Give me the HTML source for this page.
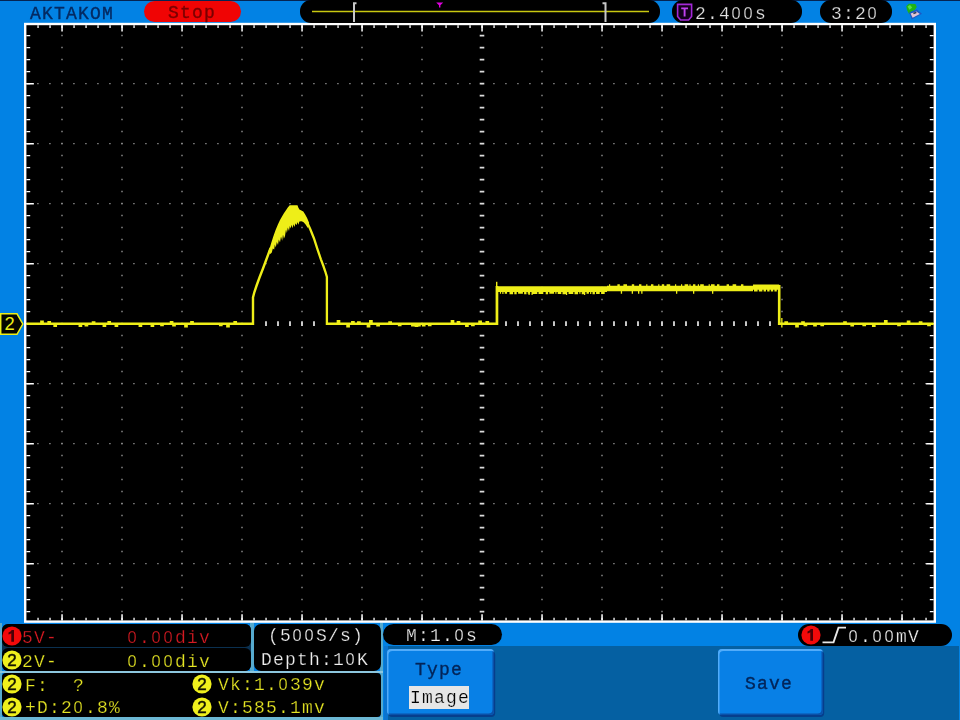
<!DOCTYPE html>
<html><head><meta charset="utf-8"><title>scope</title>
<style>
html,body{margin:0;padding:0;}
body{width:960px;height:720px;overflow:hidden;background:#0282e4;position:relative;font-family:"Liberation Mono",monospace;}
.abs{position:absolute;}
.m{position:absolute;font-family:"Liberation Mono",monospace;font-size:19.2px;letter-spacing:0px;line-height:22px;height:22px;white-space:pre;will-change:transform;}
.z{display:inline-block;width:12px;letter-spacing:0;text-align:center;font-family:"Liberation Sans",sans-serif;font-size:17.4px;line-height:12px;margin-left:-0.6px;margin-right:0.6px;transform:scaleX(0.94);}
.pill{position:absolute;background:#000;border-radius:11px;}
.box{position:absolute;background:#000;}
.circ{position:absolute;width:19px;height:19px;border-radius:50%;font-family:"Liberation Sans",sans-serif;font-size:16px;font-weight:bold;line-height:19px;text-align:center;}
.btn{position:absolute;background:#0880e6;border-radius:4px;box-shadow:inset 1.5px 2px 0 #52acfa, inset -1.5px -1.5px 0 #0a50a8, 1.2px 2px 0 #063e8c;}
</style></head><body>
<div class="abs" style="left:0;top:0;width:960px;height:1px;background:#052452"></div>
<svg class="abs" style="left:0;top:0" width="960" height="720" viewBox="0 0 960 720">
<rect x="24.0" y="22.8" width="912.0" height="600.0" fill="#fff"/>
<rect x="26.4" y="25.2" width="907.2" height="595.1999999999999" fill="#000"/>
<line x1="62.0" y1="34.8" x2="62.0" y2="617.4" stroke="#8c8c8c" stroke-width="1.45" stroke-dasharray="1.45 10.55"/>
<line x1="122.0" y1="34.8" x2="122.0" y2="617.4" stroke="#8c8c8c" stroke-width="1.45" stroke-dasharray="1.45 10.55"/>
<line x1="182.0" y1="34.8" x2="182.0" y2="617.4" stroke="#8c8c8c" stroke-width="1.45" stroke-dasharray="1.45 10.55"/>
<line x1="242.0" y1="34.8" x2="242.0" y2="617.4" stroke="#8c8c8c" stroke-width="1.45" stroke-dasharray="1.45 10.55"/>
<line x1="302.0" y1="34.8" x2="302.0" y2="617.4" stroke="#8c8c8c" stroke-width="1.45" stroke-dasharray="1.45 10.55"/>
<line x1="362.0" y1="34.8" x2="362.0" y2="617.4" stroke="#8c8c8c" stroke-width="1.45" stroke-dasharray="1.45 10.55"/>
<line x1="422.0" y1="34.8" x2="422.0" y2="617.4" stroke="#8c8c8c" stroke-width="1.45" stroke-dasharray="1.45 10.55"/>
<line x1="542.0" y1="34.8" x2="542.0" y2="617.4" stroke="#8c8c8c" stroke-width="1.45" stroke-dasharray="1.45 10.55"/>
<line x1="602.0" y1="34.8" x2="602.0" y2="617.4" stroke="#8c8c8c" stroke-width="1.45" stroke-dasharray="1.45 10.55"/>
<line x1="662.0" y1="34.8" x2="662.0" y2="617.4" stroke="#8c8c8c" stroke-width="1.45" stroke-dasharray="1.45 10.55"/>
<line x1="722.0" y1="34.8" x2="722.0" y2="617.4" stroke="#8c8c8c" stroke-width="1.45" stroke-dasharray="1.45 10.55"/>
<line x1="782.0" y1="34.8" x2="782.0" y2="617.4" stroke="#8c8c8c" stroke-width="1.45" stroke-dasharray="1.45 10.55"/>
<line x1="842.0" y1="34.8" x2="842.0" y2="617.4" stroke="#8c8c8c" stroke-width="1.45" stroke-dasharray="1.45 10.55"/>
<line x1="902.0" y1="34.8" x2="902.0" y2="617.4" stroke="#8c8c8c" stroke-width="1.45" stroke-dasharray="1.45 10.55"/>
<line x1="37.2" y1="83.6" x2="930.6" y2="83.6" stroke="#8c8c8c" stroke-width="1.45" stroke-dasharray="1.45 10.55"/>
<line x1="37.2" y1="143.6" x2="930.6" y2="143.6" stroke="#8c8c8c" stroke-width="1.45" stroke-dasharray="1.45 10.55"/>
<line x1="37.2" y1="203.6" x2="930.6" y2="203.6" stroke="#8c8c8c" stroke-width="1.45" stroke-dasharray="1.45 10.55"/>
<line x1="37.2" y1="263.6" x2="930.6" y2="263.6" stroke="#8c8c8c" stroke-width="1.45" stroke-dasharray="1.45 10.55"/>
<line x1="37.2" y1="383.6" x2="930.6" y2="383.6" stroke="#8c8c8c" stroke-width="1.45" stroke-dasharray="1.45 10.55"/>
<line x1="37.2" y1="443.6" x2="930.6" y2="443.6" stroke="#8c8c8c" stroke-width="1.45" stroke-dasharray="1.45 10.55"/>
<line x1="37.2" y1="503.6" x2="930.6" y2="503.6" stroke="#8c8c8c" stroke-width="1.45" stroke-dasharray="1.45 10.55"/>
<line x1="37.2" y1="563.6" x2="930.6" y2="563.6" stroke="#8c8c8c" stroke-width="1.45" stroke-dasharray="1.45 10.55"/>
<line x1="482.0" y1="34.8" x2="482.0" y2="617.4" stroke="#dcdcdc" stroke-width="4.6" stroke-dasharray="1.6 10.4"/>
<line x1="265.1" y1="323.6" x2="315.0" y2="323.6" stroke="#dcdcdc" stroke-width="4.6" stroke-dasharray="1.8 10.2"/>
<line x1="505.1" y1="323.6" x2="771.0" y2="323.6" stroke="#dcdcdc" stroke-width="4.6" stroke-dasharray="1.8 10.2"/>
<line x1="37.4" y1="26.6" x2="933.6" y2="26.6" stroke="#fff" stroke-width="2.7" stroke-dasharray="1.3 10.7"/>
<line x1="37.4" y1="619.0" x2="933.6" y2="619.0" stroke="#fff" stroke-width="2.7" stroke-dasharray="1.3 10.7"/>
<line x1="28.3" y1="35.0" x2="28.3" y2="620.4" stroke="#fff" stroke-width="3.8" stroke-dasharray="1.3 10.7"/>
<line x1="931.7" y1="35.0" x2="931.7" y2="620.4" stroke="#fff" stroke-width="3.8" stroke-dasharray="1.3 10.7"/>
<line x1="61.3" y1="28.3" x2="933.6" y2="28.3" stroke="#fff" stroke-width="6.2" stroke-dasharray="1.5 58.5"/>
<line x1="61.3" y1="617.3" x2="933.6" y2="617.3" stroke="#fff" stroke-width="6.2" stroke-dasharray="1.5 58.5"/>
<line x1="30.1" y1="82.9" x2="30.1" y2="620.4" stroke="#fff" stroke-width="7.5" stroke-dasharray="1.5 58.5"/>
<line x1="929.9" y1="82.9" x2="929.9" y2="620.4" stroke="#fff" stroke-width="7.5" stroke-dasharray="1.5 58.5"/>
<polyline points="26.4,323.7 41.4,323.7 41.4,321.8 42.6,321.8 42.6,323.7 48.6,323.7 48.6,322.2 49.8,322.2 49.8,323.7 54.6,323.7 54.6,325.7 55.8,325.7 55.8,323.7 79.8,323.7 79.8,325.7 81.0,325.7 81.0,323.7 85.8,323.7 85.8,325.3 87.0,325.3 87.0,323.7 93.0,323.7 93.0,322.5 94.2,322.5 94.2,323.7 103.8,323.7 103.8,325.7 105.0,325.7 105.0,323.7 108.6,323.7 108.6,322.2 109.8,322.2 109.8,323.7 115.8,323.7 115.8,325.7 117.0,325.7 117.0,323.7 139.8,323.7 139.8,325.7 141.0,325.7 141.0,323.7 151.8,323.7 151.8,325.7 153.0,325.7 153.0,323.7 161.4,323.7 161.4,324.9 162.6,324.9 162.6,323.7 171.0,323.7 171.0,322.2 172.2,322.2 172.2,323.7 173.4,323.7 173.4,325.3 174.6,325.3 174.6,323.7 185.4,323.7 185.4,326.3 186.6,326.3 186.6,323.7 191.4,323.7 191.4,322.2 192.6,322.2 192.6,323.7 220.2,323.7 220.2,324.9 221.4,324.9 221.4,323.7 227.4,323.7 227.4,326.3 228.6,326.3 228.6,323.7 234.6,323.7 234.6,322.2 235.8,322.2 235.8,323.7 253.5,323.7" fill="none" stroke="#eeee18" stroke-width="2.5" stroke-linejoin="miter"/>
<polyline points="326.5,323.7 337.9,323.7 337.9,321.3 339.1,321.3 339.1,323.7 347.5,323.7 347.5,326.3 348.7,326.3 348.7,323.7 352.3,323.7 352.3,322.2 353.5,322.2 353.5,323.7 358.3,323.7 358.3,322.5 359.5,322.5 359.5,323.7 367.9,323.7 367.9,326.3 369.1,326.3 369.1,323.7 370.3,323.7 370.3,321.3 371.5,321.3 371.5,323.7 377.5,323.7 377.5,325.3 378.7,325.3 378.7,323.7 389.5,323.7 389.5,322.5 390.7,322.5 390.7,323.7 399.1,323.7 399.1,324.9 400.3,324.9 400.3,323.7 412.3,323.7 412.3,325.3 413.5,325.3 413.5,323.7 415.9,323.7 415.9,325.7 417.1,325.7 417.1,323.7 418.3,323.7 418.3,325.3 419.5,325.3 419.5,323.7 423.1,323.7 423.1,325.3 424.3,325.3 424.3,323.7 429.1,323.7 429.1,324.9 430.3,324.9 430.3,323.7 451.9,323.7 451.9,321.3 453.1,321.3 453.1,323.7 457.9,323.7 457.9,322.2 459.1,322.2 459.1,323.7 466.3,323.7 466.3,325.7 467.5,325.7 467.5,323.7 472.3,323.7 472.3,324.9 473.5,324.9 473.5,323.7 479.5,323.7 479.5,321.8 480.7,321.8 480.7,323.7 486.7,323.7 486.7,322.2 487.9,322.2 487.9,323.7 498.0,323.7" fill="none" stroke="#eeee18" stroke-width="2.5" stroke-linejoin="miter"/>
<polyline points="779.0,323.7 785.6,323.7 785.6,322.5 786.8,322.5 786.8,323.7 796.4,323.7 796.4,326.3 797.6,326.3 797.6,323.7 802.4,323.7 802.4,322.5 803.6,322.5 803.6,323.7 804.8,323.7 804.8,324.9 806.0,324.9 806.0,323.7 814.4,323.7 814.4,325.3 815.6,325.3 815.6,323.7 821.6,323.7 821.6,324.9 822.8,324.9 822.8,323.7 844.4,323.7 844.4,322.5 845.6,322.5 845.6,323.7 851.6,323.7 851.6,325.3 852.8,325.3 852.8,323.7 863.6,323.7 863.6,324.9 864.8,324.9 864.8,323.7 873.2,323.7 873.2,325.7 874.4,325.7 874.4,323.7 885.2,323.7 885.2,321.3 886.4,321.3 886.4,323.7 898.4,323.7 898.4,324.9 899.6,324.9 899.6,323.7 908.0,323.7 908.0,321.8 909.2,321.8 909.2,323.7 920.0,323.7 920.0,322.5 921.2,322.5 921.2,323.7 928.4,323.7 928.4,324.9 929.6,324.9 929.6,323.7 933.6,323.7" fill="none" stroke="#eeee18" stroke-width="2.5" stroke-linejoin="miter"/>
<polyline points="253.0,325.0 253.0,297.5 254.4,292.0 256.6,285.5 259.5,277.5 263.0,268.5 265.6,261.5 268.2,254.5 270.6,248.0" fill="none" stroke="#eeee18" stroke-width="2.4" stroke-linejoin="miter"/>
<polyline points="305.8,221.0 308.4,225.0 310.4,229.5 313.9,238.2 317.6,249.6 320.9,259.3 323.4,266.0 325.3,271.5 326.9,276.8 326.9,325.0" fill="none" stroke="#eeee18" stroke-width="2.3" stroke-linejoin="miter"/>
<polygon points="268.2,251.5 269.3,249.4 271.2,243.0 273.2,236.8 275.6,230.0 278.0,224.2 280.0,220.0 282.0,216.5 283.9,213.2 285.8,210.5 287.8,207.5 289.7,205.2 297.5,205.2 298.3,207.5 299.4,209.6 301.4,210.4 303.3,211.5 305.2,214.5 307.2,218.3 309.2,223.0 307.8,228.0 305.4,224.2 303.3,221.9 301.4,221.2 299.4,221.4 298.4,224.8 297.5,222.0 296.5,225.2 295.5,223.2 294.5,227.0 293.5,224.2 292.5,228.2 291.6,224.8 290.7,228.5 289.8,226.0 289.0,231.0 287.8,227.5 286.9,233.0 286.0,229.5 285.0,236.0 283.9,238.7 283.0,234.5 282.2,240.8 281.0,236.5 280.0,242.5 278.8,239.5 278.0,245.0 276.8,242.0 275.8,247.5 274.8,244.5 274.2,249.5 272.8,248.5 271.8,252.5 270.4,254.0" fill="#eeee18"/>
<rect x="495.6" y="286" width="2.7" height="39.0" fill="#eeee18"/>
<rect x="496.0" y="281.8" width="1.4" height="5" fill="#eeee18"/>
<rect x="777.9" y="285" width="2.6" height="40.0" fill="#eeee18"/>
<rect x="781.2" y="318" width="1.3" height="9.5" fill="#eeee18"/>
<path d="M496.9 286.3h110.1v5.7h-110.1zM607.0 285.8h146.0v5.4h-146.0zM753.0 284.6h26.2v5.2h-26.2zM499.9 291.5h1.2v2.2h-1.2zM502.3 291.5h1.2v2.6h-1.2zM504.7 291.5h2.4v2.2h-2.4zM509.5 291.5h3.6v2.8h-3.6zM514.3 291.5h2.4v2.8h-2.4zM518.1 291.5h4.8v2.2h-4.8zM524.1 291.5h2.4v2.8h-2.4zM527.7 291.5h2.4v2.2h-2.4zM532.5 291.5h4.8v2.6h-4.8zM538.5 291.5h4.8v2.6h-4.8zM545.7 291.5h2.4v2.8h-2.4zM549.3 291.5h4.8v2.2h-4.8zM555.3 291.5h1.2v2.2h-1.2zM557.7 291.5h3.6v2.6h-3.6zM562.5 291.5h3.6v2.8h-3.6zM568.5 291.5h4.8v2.6h-4.8zM574.5 291.5h3.6v2.8h-3.6zM579.3 291.5h1.2v2.2h-1.2zM581.7 291.5h3.6v2.8h-3.6zM586.5 291.5h2.4v2.2h-2.4zM590.1 291.5h1.2v2.6h-1.2zM592.5 291.5h2.4v2.8h-2.4zM596.1 291.5h3.6v2.6h-3.6zM601.1 291.5h3.6v2.6h-3.6zM528.5 291.5h1.2v3.6h-1.2zM531.5 291.5h1.2v3.6h-1.2zM566.0 291.5h1.2v3.6h-1.2zM584.0 291.5h1.2v3.6h-1.2zM609.0 284.3h1.2v2.0h-1.2zM617.4 284.3h2.4v2.0h-2.4zM623.4 284.3h3.6v2.0h-3.6zM631.8 284.3h2.4v2.0h-2.4zM639.0 284.3h2.4v2.0h-2.4zM646.2 284.3h1.2v2.0h-1.2zM651.0 284.3h2.4v2.0h-2.4zM658.2 284.3h1.2v2.0h-1.2zM661.8 284.3h2.4v2.0h-2.4zM666.6 284.3h3.6v2.0h-3.6zM675.0 284.3h1.2v2.0h-1.2zM681.0 284.3h1.2v2.0h-1.2zM684.6 284.3h3.6v2.0h-3.6zM689.4 284.3h1.2v2.0h-1.2zM693.0 284.3h2.4v2.0h-2.4zM697.8 284.3h1.2v2.0h-1.2zM700.2 284.3h3.6v2.0h-3.6zM708.6 284.3h1.2v2.0h-1.2zM711.0 284.3h3.6v2.0h-3.6zM717.0 284.3h2.4v2.0h-2.4zM726.6 284.3h2.4v2.0h-2.4zM732.6 284.3h3.6v2.0h-3.6zM741.0 284.3h2.4v2.0h-2.4zM620.8 291.0h1.3v2.8h-1.3zM631.7 291.0h1.3v2.8h-1.3zM638.0 291.0h1.3v2.8h-1.3zM641.2 291.0h1.3v2.8h-1.3zM676.0 291.0h1.3v2.8h-1.3zM693.0 291.0h1.3v2.8h-1.3zM712.0 291.0h1.3v2.8h-1.3zM754.0 289.4h3.6v2.1h-3.6zM758.8 289.4h3.6v2.1h-3.6zM763.6 289.4h2.4v2.1h-2.4zM767.2 289.4h2.4v2.1h-2.4zM770.8 289.4h2.4v2.1h-2.4zM774.4 289.4h2.4v2.1h-2.4z" fill="#eeee18"/>
<path d="M0.7 313.8H17L22.8 324L17 334.3H0.7Z" fill="#060600" stroke="#eeee18" stroke-width="1.5" stroke-linejoin="miter"/>
<text x="9.7" y="330.1" text-anchor="middle" textLength="10.2" lengthAdjust="spacingAndGlyphs" font-family="Liberation Sans, sans-serif" font-size="17.5" fill="#eeee18">2</text>
</svg>
<div class="m" style="left:29.82px;top:3.24px;color:#042a62;font-size:18.0px;letter-spacing:1.20px;-webkit-text-stroke:0.35px #042a62;">AKTAKOM</div>
<div class="abs" style="left:144.3px;top:0.8px;width:96.3px;height:21.7px;background:#f00404;border-radius:11px"></div>
<div class="m" style="left:167.74px;top:2.04px;color:#7a0000;font-size:18.0px;letter-spacing:1.20px;-webkit-text-stroke:0.35px #7a0000;">Stop</div>
<div class="pill" style="left:300px;top:0px;width:360px;height:22.5px"></div>
<svg class="abs" style="left:300px;top:0" width="360" height="24" viewBox="300 0 360 24"><line x1="312" y1="11.4" x2="649" y2="11.4" stroke="#c8c810" stroke-width="1.5"/><path d="M356.5 3.2H354V22" fill="none" stroke="#c8c8c8" stroke-width="2"/><path d="M602.5 3.2H605.5V22" fill="none" stroke="#c8c8c8" stroke-width="2"/><path d="M436.2 2.6H443.2L440.4 5.2V7.6H439V5.2Z" fill="#e000e0"/></svg>
<div class="pill" style="left:671.5px;top:0px;width:130px;height:22.5px"></div>
<svg class="abs" style="left:675px;top:2px" width="20" height="20" viewBox="0 0 20 20"><path d="M2.6 2.4H16.6V14.4L13.6 18H5.6L2.6 14.4Z" fill="#14001c" stroke="#a428d8" stroke-width="1.6"/><path d="M6.2 6.4H13M9.6 6.4V14.4" fill="none" stroke="#c040f0" stroke-width="1.9"/></svg>
<div class="m" style="left:694.51px;top:3.04px;color:#e4e4e4;font-size:18.0px;letter-spacing:1.20px;-webkit-text-stroke:0.25px #000;">2.4<span class="z">0</span><span class="z">0</span>s</div>
<div class="pill" style="left:820px;top:0px;width:72px;height:22.5px"></div>
<div class="m" style="left:831.29px;top:3.04px;color:#e4e4e4;font-size:18.0px;letter-spacing:1.20px;-webkit-text-stroke:0.25px #000;">3:2<span class="z">0</span></div>
<svg class="abs" style="left:903px;top:1px" width="22" height="20" viewBox="903 1 22 20"><path d="M906.2 6.2L908.8 3.8L915.4 4L916.8 7L914.6 10.2L911.4 11.6L910.6 14.2L908.8 13.6L907.2 10.4Z" fill="#20b414"/><path d="M907.6 6.6L910 5L912.2 7.4L909.6 9.8Z" fill="#58e048"/><path d="M909 12.6L916.8 9.6L922 13.8L911.8 19.4Z" fill="#1c58c4"/><path d="M910.6 13.6L916.4 11.4L919.8 14L912.6 17.8Z" fill="#e0c4d4"/><path d="M913 12.8L915.8 11.8L916.8 13L913.8 14.2Z" fill="#2c3c58"/></svg>
<div class="abs" style="left:383.5px;top:646px;width:575.5px;height:74px;background:#0560a2"></div>
<div class="abs" style="left:383.5px;top:646px;width:4px;height:74px;background:#0a74d0"></div>
<div class="abs" style="left:0;top:623px;width:2.2px;height:97px;background:#56aace"></div>
<div class="abs" style="left:250.4px;top:623px;width:3.2px;height:49px;background:#56aace"></div>
<div class="abs" style="left:380.4px;top:623px;width:2.8px;height:97px;background:#56aace"></div>
<div class="abs" style="left:0;top:671px;width:383px;height:2.4px;background:#8cc6de"></div>
<div class="abs" style="left:0;top:716.6px;width:383px;height:3.4px;background:#6cb8d4"></div>
<div class="box" style="left:2px;top:624px;width:248.5px;height:47px;border-radius:6px;background:#0a3050"></div>
<div class="box" style="left:2px;top:624px;width:248.5px;height:22.8px;border-radius:6px"></div>
<div class="box" style="left:2px;top:648px;width:248.5px;height:23px;border-radius:6px"></div>
<div class="box" style="left:253.5px;top:624px;width:127px;height:47px;border-radius:7px"></div>
<div class="box" style="left:2px;top:673.4px;width:378.5px;height:43.2px;border-radius:4px"></div>
<svg class="abs" style="left:0.30px;top:624.20px" width="24" height="24" viewBox="-12 -12 24 24"><circle cx="0" cy="0" r="9.60" fill="#f20a0a"/><path d="M2,-5.9V5.7H-0.7V-2.7Q-1.8,-1.9 -3.5,-1.5V-3.6Q-1.2,-4.3 -0.2,-5.9Z" fill="#4a0006"/></svg>
<div class="m" style="left:21.81px;top:627.34px;color:#d41a22;font-size:18.0px;letter-spacing:1.20px;-webkit-text-stroke:0.25px #000;">5V-</div>
<div class="m" style="left:126.76px;top:627.34px;color:#d41a22;font-size:18.0px;letter-spacing:1.20px;-webkit-text-stroke:0.25px #000;"><span class="z">0</span>.<span class="z">0</span><span class="z">0</span>div</div>
<svg class="abs" style="left:0.30px;top:648.00px" width="24" height="24" viewBox="-12 -12 24 24"><circle cx="0" cy="0" r="9.60" fill="#f0f01c"/><text x="0" y="6.1" text-anchor="middle" font-family="Liberation Sans, sans-serif" font-size="17" fill="#141400" stroke="#141400" stroke-width="0.45">2</text></svg>
<div class="m" style="left:21.74px;top:651.34px;color:#e6e624;font-size:18.0px;letter-spacing:1.20px;-webkit-text-stroke:0.25px #000;">2V-</div>
<div class="m" style="left:126.76px;top:651.34px;color:#e6e624;font-size:18.0px;letter-spacing:1.20px;-webkit-text-stroke:0.25px #000;"><span class="z">0</span>.<span class="z">0</span><span class="z">0</span>div</div>
<div class="m" style="left:268.21px;top:624.74px;color:#f0f0f0;font-size:18.0px;letter-spacing:1.20px;-webkit-text-stroke:0.25px #000;">(5<span class="z">0</span><span class="z">0</span>S/s)</div>
<div class="m" style="left:261.15px;top:648.74px;color:#f0f0f0;font-size:18.0px;letter-spacing:1.20px;-webkit-text-stroke:0.25px #000;">Depth:1<span class="z">0</span>K</div>
<svg class="abs" style="left:-0.20px;top:672.20px" width="24" height="24" viewBox="-12 -12 24 24"><circle cx="0" cy="0" r="9.60" fill="#f0f01c"/><text x="0" y="6.1" text-anchor="middle" font-family="Liberation Sans, sans-serif" font-size="17" fill="#141400" stroke="#141400" stroke-width="0.45">2</text></svg>
<div class="m" style="left:24.93px;top:674.64px;color:#e6e624;font-size:18.0px;letter-spacing:1.20px;-webkit-text-stroke:0.25px #000;">F:  ?</div>
<svg class="abs" style="left:-0.20px;top:694.70px" width="24" height="24" viewBox="-12 -12 24 24"><circle cx="0" cy="0" r="9.60" fill="#f0f01c"/><text x="0" y="6.1" text-anchor="middle" font-family="Liberation Sans, sans-serif" font-size="17" fill="#141400" stroke="#141400" stroke-width="0.45">2</text></svg>
<div class="m" style="left:25.18px;top:697.04px;color:#e6e624;font-size:18.0px;letter-spacing:1.20px;-webkit-text-stroke:0.25px #000;">+D:2<span class="z">0</span>.8%</div>
<svg class="abs" style="left:190.00px;top:672.20px" width="24" height="24" viewBox="-12 -12 24 24"><circle cx="0" cy="0" r="9.60" fill="#f0f01c"/><text x="0" y="6.1" text-anchor="middle" font-family="Liberation Sans, sans-serif" font-size="17" fill="#141400" stroke="#141400" stroke-width="0.45">2</text></svg>
<div class="m" style="left:217.81px;top:674.34px;color:#e6e624;font-size:18.0px;letter-spacing:1.20px;-webkit-text-stroke:0.25px #000;">Vk:1.<span class="z">0</span>39v</div>
<svg class="abs" style="left:190.00px;top:694.70px" width="24" height="24" viewBox="-12 -12 24 24"><circle cx="0" cy="0" r="9.60" fill="#f0f01c"/><text x="0" y="6.1" text-anchor="middle" font-family="Liberation Sans, sans-serif" font-size="17" fill="#141400" stroke="#141400" stroke-width="0.45">2</text></svg>
<div class="m" style="left:217.81px;top:696.84px;color:#e6e624;font-size:18.0px;letter-spacing:1.20px;-webkit-text-stroke:0.25px #000;">V:585.1mv</div>
<div class="pill" style="left:383px;top:624px;width:119px;height:21.4px"></div>
<div class="m" style="left:405.52px;top:625.44px;color:#f0f0f0;font-size:18.0px;letter-spacing:1.20px;-webkit-text-stroke:0.25px #000;">M:1.<span class="z">0</span>s</div>
<div class="btn" style="left:387px;top:649px;width:107px;height:66px"></div>
<div class="m" style="left:415.18px;top:658.74px;color:#032458;font-size:18.0px;letter-spacing:1.20px;-webkit-text-stroke:0.35px #032458;">Type</div>
<div class="abs" style="left:409px;top:686px;width:60px;height:23px;background:#e6e6e6"></div>
<div class="m" style="left:410.05px;top:687.14px;color:#000;font-size:18.0px;letter-spacing:1.20px;-webkit-text-stroke:0.2px #e6e6e6;">Image</div>
<div class="btn" style="left:717.5px;top:649px;width:105px;height:66px"></div>
<div class="m" style="left:745.17px;top:673.04px;color:#032458;font-size:18.0px;letter-spacing:1.20px;-webkit-text-stroke:0.35px #032458;">Save</div>
<div class="pill" style="left:798px;top:624px;width:154px;height:21.6px"></div>
<svg class="abs" style="left:798.50px;top:622.50px" width="24" height="24" viewBox="-12 -12 24 24"><circle cx="0" cy="0" r="9.60" fill="#f20a0a"/><path d="M2,-5.9V5.7H-0.7V-2.7Q-1.8,-1.9 -3.5,-1.5V-3.6Q-1.2,-4.3 -0.2,-5.9Z" fill="#4a0006"/></svg>
<svg class="abs" style="left:820px;top:624px" width="30" height="22" viewBox="820 624 30 22"><path d="M822.5 642.4H833.5L838.5 627.6H846" fill="none" stroke="#e8e8e8" stroke-width="1.9"/></svg>
<div class="m" style="left:847.85px;top:626.24px;color:#f0f0f0;font-size:18.0px;letter-spacing:1.20px;-webkit-text-stroke:0.25px #000;"><span class="z">0</span>.<span class="z">0</span><span class="z">0</span>mV</div>
</body></html>
